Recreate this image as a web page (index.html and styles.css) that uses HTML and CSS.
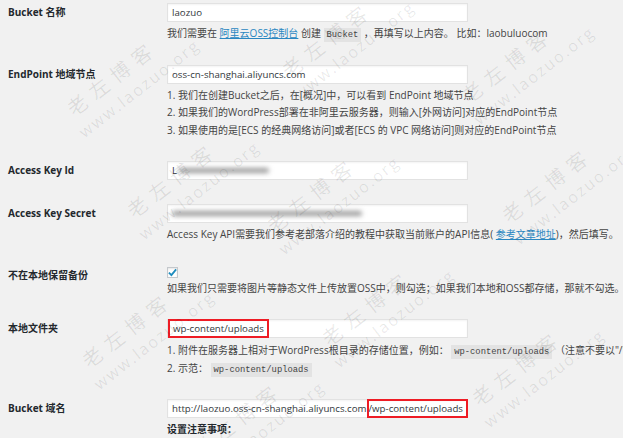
FILE: index.html
```html
<!DOCTYPE html>
<html>
<head>
<meta charset="utf-8">
<title>OSS 设置</title>
<link rel="stylesheet" href="styles.css">
</head>
<body>
<!-- settings table -->
<div class="form">
  <div class="row first">
    <div class="label">Bucket 名称</div>
    <div class="cell">
      <div class="field">laozuo</div>
      <p class="desc">我们需要在 <a href="#">阿里云OSS控制台</a> 创建 <code>Bucket</code> ，再填写以上内容。 比如：laobuluocom</p>
    </div>
  </div>

  <div class="row">
    <div class="label">EndPoint 地域节点</div>
    <div class="cell">
      <div class="field">oss-cn-shanghai.aliyuncs.com</div>
      <p class="desc">1. 我们在创建Bucket之后，在[概况]中，可以看到 EndPoint 地域节点<br>2. 如果我们的WordPress部署在非阿里云服务器，则输入[外网访问]对应的EndPoint节点<br>3. 如果使用的是[ECS 的经典网络访问]或者[ECS 的 VPC 网络访问]则对应的EndPoint节点</p>
    </div>
  </div>

  <div class="row">
    <div class="label">Access Key Id</div>
    <div class="cell">
      <div class="field">L<span class="blur short"></span></div>
    </div>
  </div>

  <div class="row second">
    <div class="label">Access Key Secret</div>
    <div class="cell">
      <div class="field"><span class="blur long"></span></div>
      <p class="desc">Access Key API需要我们参考老部落介绍的教程中获取当前账户的API信息( <a href="#">参考文章地址</a>)，然后填写。</p>
    </div>
  </div>

  <div class="row">
    <div class="label">不在本地保留备份</div>
    <div class="cell">
      <div class="check">
        <svg width="10" height="9" viewBox="0 0 10 9"><path d="M1 4.6 L3.8 7.4 L9 1" fill="none" stroke="#1e8cbe" stroke-width="2"/></svg>
      </div>
      <p class="desc tight">如果我们只需要将图片等静态文件上传放置OSS中，则勾选；如果我们本地和OSS都存储，那就不勾选。</p>
    </div>
  </div>

  <div class="row">
    <div class="label">本地文件夹</div>
    <div class="cell">
      <div class="field flush"><span class="mark">wp-content/uploads</span></div>
      <p class="desc loose">1. 附件在服务器上相对于WordPress根目录的存储位置，例如： <code>wp-content/uploads</code> （注意不要以"/"开头和结尾）<br>2. 示范： <code>wp-content/uploads</code></p>
    </div>
  </div>

  <div class="row last">
    <div class="label">Bucket 域名</div>
    <div class="cell">
      <div class="field">http://laozuo.oss-cn-shanghai.aliyuncs.com<span class="mark tail">/wp-content/uploads</span></div>
      <p class="desc"><b>设置注意事项：</b></p>
    </div>
  </div>
</div>

<!-- watermark layer -->
<div class="watermarks">
  <div class="wm wm1"><span>老左博客</span><span class="url">www.laozuo.org</span></div>
  <div class="wm wm2"><span>老左博客</span><span class="url">www.laozuo.org</span></div>
  <div class="wm wm3"><span>老左博客</span><span class="url">www.laozuo.org</span></div>
  <div class="wm wm4"><span>老左博客</span><span class="url">www.laozuo.org</span></div>
  <div class="wm wm5"><span>老左博客</span><span class="url">www.laozuo.org</span></div>
  <div class="wm wm6"><span>老左博客</span><span class="url">www.laozuo.org</span></div>
  <div class="wm wm7"><span>老左博客</span><span class="url">www.laozuo.org</span></div>
  <div class="wm wm8"><span>老左博客</span><span class="url">www.laozuo.org</span></div>
  <div class="wm wm9"><span>老左博客</span><span class="url">www.laozuo.org</span></div>
  <div class="wm wm10"><span>老左博客</span><span class="url">www.laozuo.org</span></div>
</div>
</body>
</html>
```

FILE: styles.css
```css
body {
margin: 0;
padding: 0 0 0 8px;
background: #f1f1f1;
color: #444;
font-family: "Open Sans", "Noto Sans CJK SC", sans-serif;
font-size: 10px;
overflow: hidden;
position: relative;
height: 438px;
}
.row {
display: grid;
grid-template-columns: 159px 1fr;
padding: 11px 0;
}
.row.first {
padding-top: 3px;
}
.row.second {
padding-top: 13px;
}
.row.last {
padding-top: 11px;
}
.label {
font-weight: bold;
color: #23282d;
line-height: 19px;
white-space: nowrap;
}
.cell {
min-width: 0;
}
.field {
box-sizing: border-box;
width: 301px;
height: 19px;
background: #fff;
border: 1px solid #e2e2e2;
box-shadow: inset 0 1px 2px rgba(0, 0, 0, 0.05);
padding: 0 4px;
color: #32373c;
font-size: 9.7px;
display: flex;
align-items: center;
white-space: nowrap;
}
.field.flush {
padding-left: 0;
}
.mark {
box-sizing: border-box;
height: 19px;
margin: -1px 0;
border: 2px solid #ee1c25;
padding: 0 3px;
display: flex;
align-items: center;
}
.mark.tail {
flex: 1;
padding-left: 0;
margin-right: -5px;
}
.blur {
display: inline-block;
height: 5px;
background: #9a9a9a;
border-radius: 3px;
filter: blur(2.5px);
}
.blur.short {
width: 90px;
margin-left: 2px;
}
.blur.long {
width: 190px;
}
.desc {
margin: 3px 0 0;
line-height: 17.5px;
white-space: nowrap;
}
.desc.tight {
margin-top: 2px;
}
.desc.loose {
margin-top: 4px;
}
.desc b {
color: #23282d;
line-height: 1;
}
a {
color: #2a87c1;
}
code {
font-family: "Liberation Mono", monospace;
font-size: 8.8px;
line-height: 1;
background: #e3e3e3;
padding: 2px 3px;
color: #444;
}
.check {
box-sizing: border-box;
width: 11px;
height: 11px;
margin-top: 1px;
background: #fff;
border: 1px solid #c4c8cc;
box-shadow: inset 0 1px 2px rgba(0, 0, 0, 0.1);
display: flex;
align-items: center;
justify-content: center;
}
.watermarks {
position: absolute;
top: 0;
left: 0;
width: 623px;
height: 438px;
overflow: hidden;
pointer-events: none;
}
.wm {
position: absolute;
display: flex;
flex-direction: column;
align-items: center;
transform: translate(-50%, -50%) rotate(-38deg);
color: rgba(0, 0, 0, 0.09);
white-space: nowrap;
}
.wm span {
font-size: 20px;
letter-spacing: 7px;
line-height: 24px;
}
.wm .url {
font-family: "Open Sans", sans-serif;
font-size: 16px;
letter-spacing: 2px;
margin-left: 30px;
}
.wm1 { left: 120px; top: 88px; }
.wm2 { left: 335px; top: 50px; }
.wm3 { left: 515px; top: 75px; }
.wm4 { left: 180px; top: 190px; }
.wm5 { left: 320px; top: 205px; }
.wm6 { left: 555px; top: 195px; }
.wm7 { left: 135px; top: 340px; }
.wm8 { left: 375px; top: 318px; }
.wm9 { left: 525px; top: 378px; }
.wm10 { left: 245px; top: 430px; }
```
